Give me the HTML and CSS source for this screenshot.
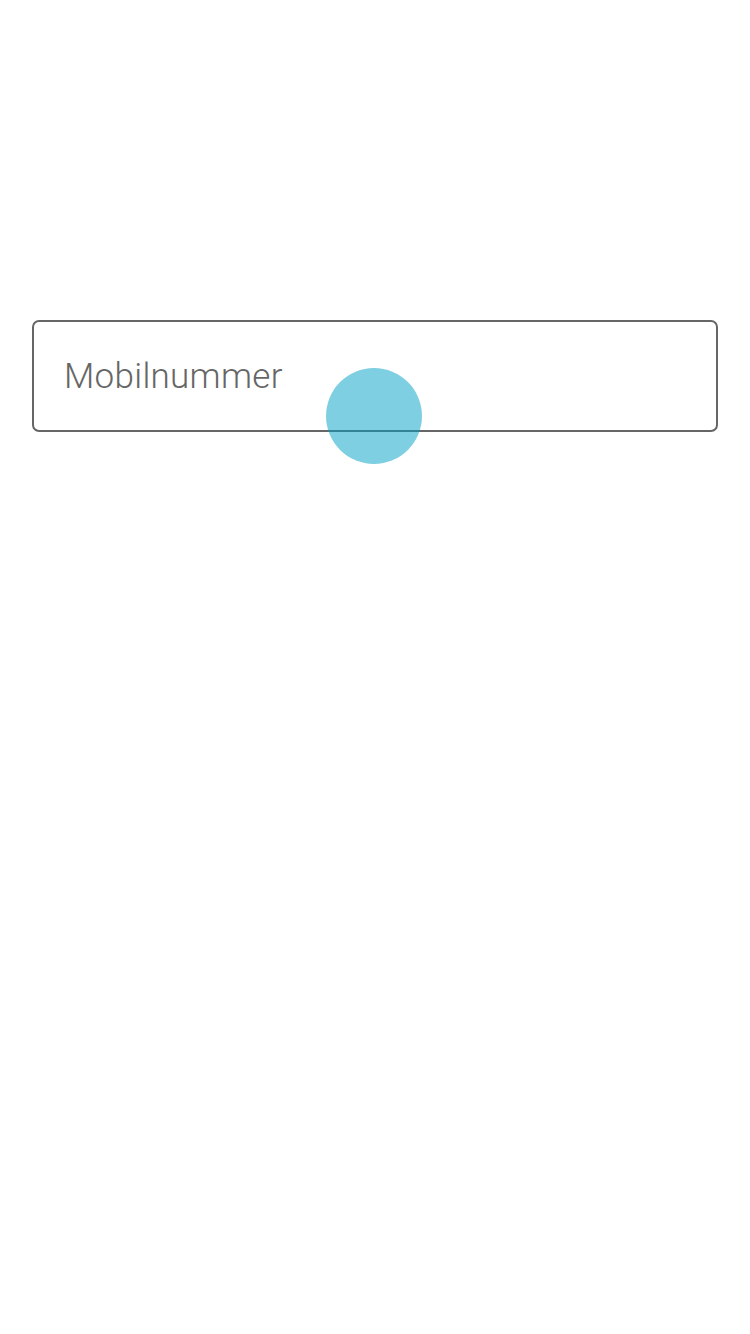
FILE: index.html
```html
<!DOCTYPE html>
<html lang="de">
<head>
    <meta charset="UTF-8">
    <meta name="viewport" content="width=device-width, initial-scale=1.0">
    <title>Mobilnummer</title>
    <link rel="stylesheet" href="styles.css">
</head>
<body>
    <main class="login">
        <label class="phone_field">
            <input type="tel" class="phone_input" placeholder="Mobilnummer">
        </label>
    </main>
    <div class="touch_dot"></div>
</body>
</html>
```

FILE: styles.css
```css
* {
    margin: 0;
    padding: 0;
    box-sizing: border-box;
}
body {
    min-height: 100vh;
    background-color: #fff;
    font-family: Roboto, 'Noto Sans', Arial, sans-serif;
    position: relative;
}
.login {
    padding: 320px 32px 0 32px;
}
.phone_field {
    display: block;
}
.phone_input {
    display: block;
    width: 100%;
    height: 112px;
    padding: 0 30px;
    border: 2px solid #666;
    border-radius: 7px;
    font-family: Roboto, 'Noto Sans', Arial, sans-serif;
    font-size: 35px;
    font-weight: 300;
    letter-spacing: 0.3px;
    color: #333;
    outline: none;
    background: #fff;
}
.phone_input::placeholder {
    color: #666;
}
.touch_dot {
    position: absolute;
    left: 326px;
    top: 368px;
    width: 96px;
    height: 96px;
    border-radius: 50%;
    background-color: rgba(0, 160, 198, 0.5);
    pointer-events: none;
}
```
